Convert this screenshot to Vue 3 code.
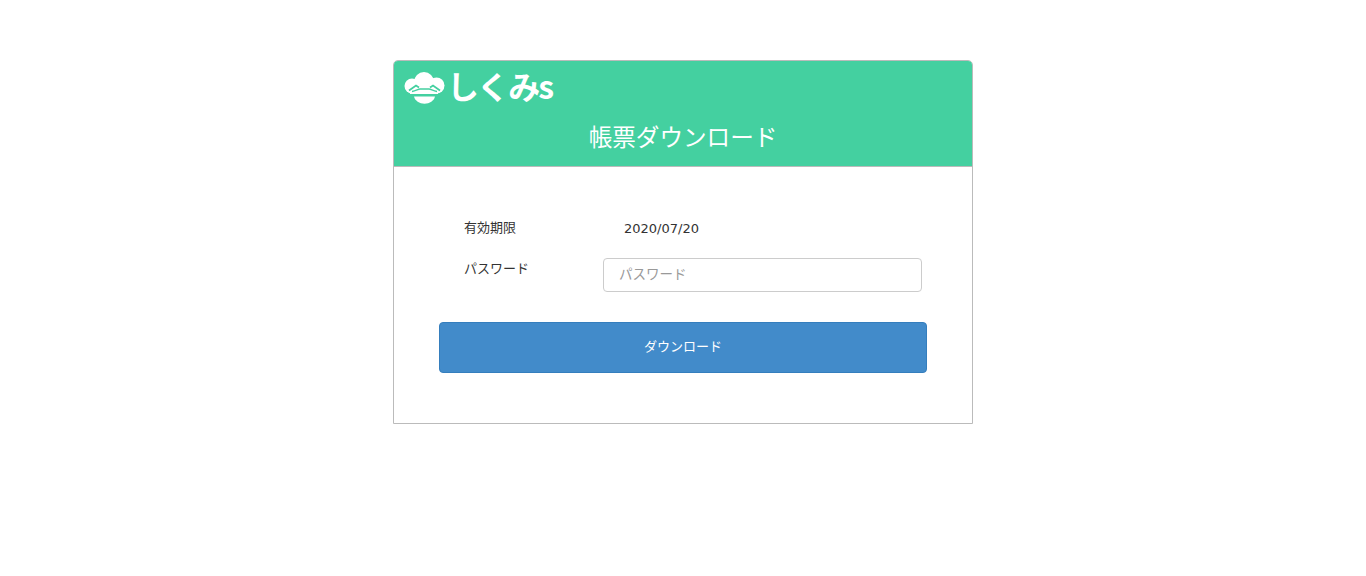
<template>
  <div class="page">
    <div class="card">
      <div class="card-header">
        <div class="logo">
          <svg class="logo-mark" viewBox="0 0 41 32" width="41" height="32">
            <circle cx="8" cy="14" r="7.500" fill="#fff"/>
            <circle cx="20" cy="10" r="10" fill="#fff"/>
            <circle cx="32.500" cy="13.500" r="8" fill="#fff"/>
            <rect x="6" y="12" width="28" height="10" fill="#fff"/>
            <path fill="none" stroke="#44d0a0" stroke-width="1.800" d="M5 18.500l7-5 3 2M36 18.500l-7-5-3 2"/>
            <path fill="none" stroke="#44d0a0" stroke-width="1.300" d="M8 19.500c4-.5 6-2.500 8-2.500h9c2 0 4 2 8 2.500"/>
            <path fill="#44d0a0" d="M0 23h41v1.600H0z"/>
            <path fill="#fff" d="M10 24.600h21c-.8 4.200-5.500 7.200-10.500 7.200S10.800 28.800 10 24.600z"/>
          </svg>
          <span class="logo-text">しくみs</span>
        </div>
        <h1 class="title">帳票ダウンロード</h1>
      </div>
      <div class="card-body">
        <div class="row expire">
          <span class="label">有効期限</span>
          <span class="value">2020/07/20</span>
        </div>
        <div class="row password">
          <label class="label">パスワード</label>
          <input class="input" type="password" placeholder="パスワード" />
        </div>
        <button class="btn" type="button">ダウンロード</button>
      </div>
    </div>
  </div>
</template>

<script setup>
</script>

<style>
body {
  background: #fff;
}
</style>

<style scoped>
.page {
  padding-top: 60px;
  font-family: "Noto Sans CJK JP", "Noto Sans", sans-serif;
  color: #333;
}

.card {
  width: 580px;
  height: 364px;
  box-sizing: border-box;
  margin: 0 auto;
  border: 1px solid #bbb;
  border-radius: 5px 5px 0 0;
}

.card-header {
  height: 105px;
  background: #44d0a0;
  border-radius: 4px 4px 0 0;
  border-bottom: 1px solid #bbb;
}

.logo {
  display: flex;
  align-items: center;
  height: 52px;
  padding-left: 10px;
  gap: 2px;
}

.logo-mark {
  flex-shrink: 0;
  margin-top: 2px;
}

.logo-text {
  color: #fff;
  font-size: 32px;
  font-weight: 700;
  line-height: 1;
  letter-spacing: -2px;
  padding-bottom: 4px;
}

.title {
  margin: 0;
  color: #fff;
  font-size: 23.6px;
  font-weight: 400;
  line-height: 30px;
  text-align: center;
  padding-top: 8px;
}

.card-body {
  padding: 49px 45px 0;
}

.row {
  display: flex;
  font-size: 13px;
  padding-left: 25px;
}

.expire {
  height: 22px;
  align-items: center;
}

.expire .label {
  width: 160px;
  padding-bottom: 1px;
}

.password {
  margin-top: 20px;
  height: 34px;
  padding-right: 5px;
}

.password .label {
  width: 139px;
  line-height: 20px;
}

.value {
  font-family: "DejaVu Sans", sans-serif;
  padding-top: 2px;
}

.input {
  flex: 1;
  min-width: 0;
  height: 34px;
  box-sizing: border-box;
  border: 1px solid #ccc;
  border-radius: 4px;
  padding: 0 15px 4px;
  font-family: inherit;
  font-size: 13.500px;
  color: #555;
  outline: none;
}

.input::placeholder {
  color: #999;
}

.btn {
  display: block;
  width: 488px;
  height: 51px;
  margin-top: 30px;
  padding-bottom: 6px;
  border: 1px solid #357ebd;
  border-radius: 4px;
  background: #428bca;
  color: #fff;
  font-family: inherit;
  font-size: 13px;
}
</style>
